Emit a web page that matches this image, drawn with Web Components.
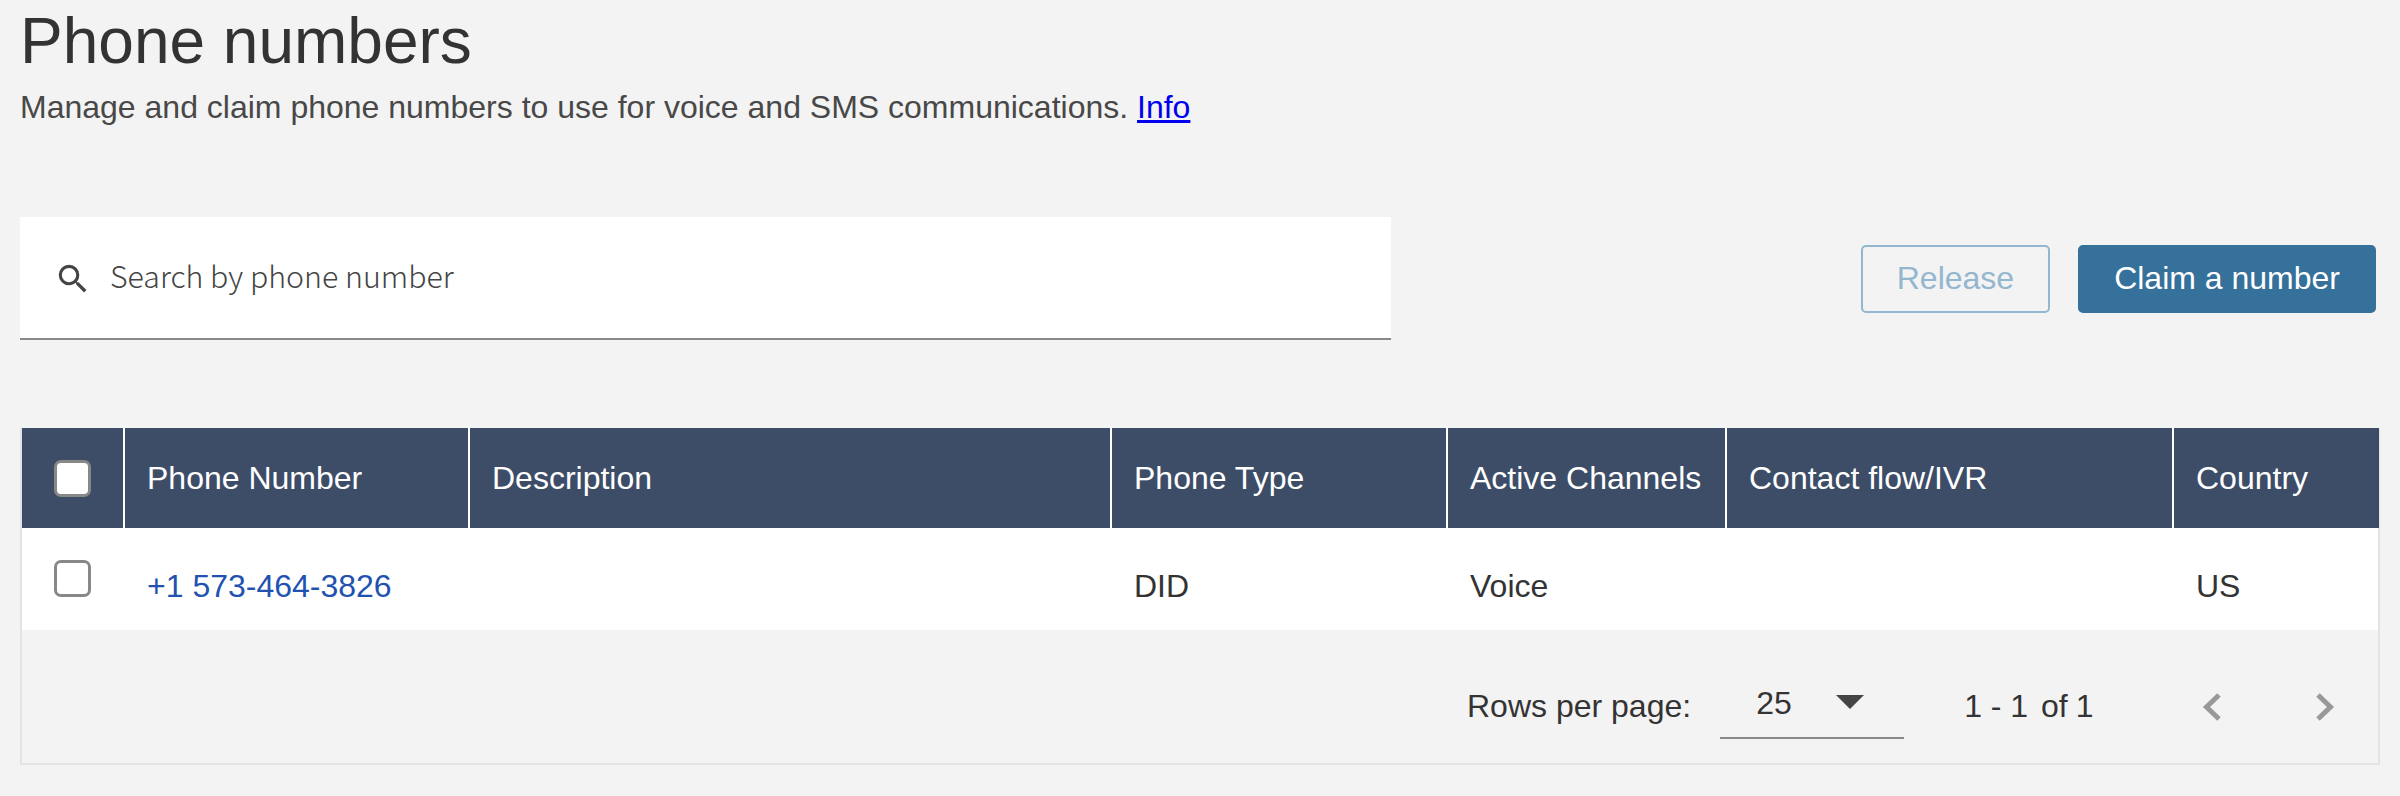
<!DOCTYPE html>
<html>
<head>
<meta charset="utf-8">
<title>Phone numbers</title>
<style>
html, body { margin: 0; background: #f3f3f3; }
body { font-family: "Liberation Sans", Arial, sans-serif; }
</style>
</head>
<body>
<phone-page>
    <page-heading title="Phone numbers">
        Manage and claim phone numbers to use for voice and SMS communications. <a href="#" style="color:#0000ee">Info</a>
    </page-heading>
    <page-toolbar>
        <search-box slot="search" placeholder="Search by phone number"></search-box>
        <action-button disabled>Release</action-button>
        <action-button>Claim a number</action-button>
    </page-toolbar>
    <numbers-table></numbers-table>
</phone-page>

<script>
class PhonePage extends HTMLElement {
    constructor() {
        super();
        this.attachShadow({ mode: 'open' });
        this.shadowRoot.innerHTML = `
<style>
:host { display: block; padding: 0 20px; height: 796px; box-sizing: border-box; overflow: hidden; }
</style>
<slot></slot>`;
    }
}

class PageHeading extends HTMLElement {
    constructor() {
        super();
        this.attachShadow({ mode: 'open' });
        this.shadowRoot.innerHTML = `
<style>
:host { display: block; }
h1 { margin: 0; padding-top: 6px; font-size: 64px; line-height: 70px; font-weight: 400; color: #333; }
p { margin: 0; padding-top: 13px; font-size: 32px; line-height: 36px; color: #484848; }
</style>
<h1></h1>
<p><slot></slot></p>`;
    }

    connectedCallback() {
        this.shadowRoot.querySelector('h1').textContent = this.getAttribute('title');
    }
}

class PageToolbar extends HTMLElement {
    constructor() {
        super();
        this.attachShadow({ mode: 'open' });
        this.shadowRoot.innerHTML = `
<style>
:host { display: flex; align-items: flex-start; gap: 28px; margin-top: 92px; padding-right: 4px; }
.search { flex: 1; display: block; }
</style>
<div class="search"><slot name="search"></slot></div>
<slot></slot>`;
    }
}

class SearchBox extends HTMLElement {
    constructor() {
        super();
        this.attachShadow({ mode: 'open' });
        this.shadowRoot.innerHTML = `
<style>
:host { display: flex; align-items: center; width: 1371px; height: 123px; box-sizing: border-box; background: #fff; border-bottom: 2px solid #888; padding-left: 34px; }
svg { width: 38px; height: 38px; margin-right: 18px; flex: none; position: relative; top: 1px; }
span { font-family: "Noto Sans CJK KR", "Noto Sans", sans-serif; font-size: 30.3px; font-weight: 300; color: #444; position: relative; top: -3px; }
</style>
<svg viewBox="0 0 24 24"><path fill="#444" d="M15.5 14h-.79l-.28-.27A6.47 6.47 0 0 0 16 9.5 6.5 6.5 0 1 0 9.5 16c1.61 0 3.09-.59 4.23-1.57l.27.28v.79l5 4.99L20.49 19l-4.99-5zm-6 0C7.01 14 5 11.99 5 9.5S7.01 5 9.5 5 14 7.01 14 9.5 11.99 14 9.5 14z"/></svg>
<span></span>`;
    }

    connectedCallback() {
        this.shadowRoot.querySelector('span').textContent = this.getAttribute('placeholder');
    }
}

class ActionButton extends HTMLElement {
    constructor() {
        super();
        this.attachShadow({ mode: 'open' });
        // top margin centres the buttons on the search box
        this.shadowRoot.innerHTML = `
<style>
:host { display: inline-flex; align-items: center; justify-content: center; height: 68px; box-sizing: border-box; margin-top: 28px; padding: 0 34px 2px; border-radius: 5px; background: #35719a; border: 2px solid #35719a; color: #fff; font-size: 32px; }
:host([disabled]) { background: transparent; border-color: #93b7cf; color: #93b7cf; }
</style>
<slot></slot>`;
    }
}

class NumbersTable extends HTMLElement {
    constructor() {
        super();
        this.attachShadow({ mode: 'open' });
        this.shadowRoot.innerHTML = `
<style>
:host { display: block; margin-top: 88px; width: 2360px; box-sizing: border-box; border: 2px solid #e3e3e3; border-top: 0; font-size: 32px; }
.grid { display: grid; grid-template-columns: 101px 343px 640px 334px 277px 445px 205px; column-gap: 2px; }
.head { height: 100px; background: #fff; }
.head > div { background: #3d4d68; color: #fff; display: flex; align-items: center; padding-left: 22px; }
.row { height: 102px; background: #fff; color: #333; }
.row > div { display: flex; align-items: center; padding-left: 22px; padding-top: 14px; box-sizing: border-box; }
.head > .check, .row > .check { padding: 0; justify-content: center; }
.row > .check { align-items: flex-start; padding-top: 32px; }
.box { width: 37px; height: 37px; box-sizing: border-box; border: 3px solid #888; border-radius: 7px; background: #fff; margin-left: -1px; }
a { color: #2252b0; text-decoration: none; }
</style>
<div class="grid head">
    <div class="check"><span class="box"></span></div>
    <div>Phone Number</div>
    <div>Description</div>
    <div>Phone Type</div>
    <div>Active Channels</div>
    <div>Contact flow/IVR</div>
    <div>Country</div>
</div>
<div class="grid row">
    <div class="check"><span class="box"></span></div>
    <div><a href="#">+1 573-464-3826</a></div>
    <div></div>
    <div>DID</div>
    <div>Voice</div>
    <div></div>
    <div>US</div>
</div>
<table-footer></table-footer>`;
    }
}

class TableFooter extends HTMLElement {
    constructor() {
        super();
        this.attachShadow({ mode: 'open' });
        this.shadowRoot.innerHTML = `
<style>
:host { display: flex; align-items: center; height: 133px; color: #333; font-size: 32px; padding: 20px 0 0 1445px; box-sizing: border-box; }
.select { display: flex; width: 184px; height: 66px; margin: -2px 0 0 29px; box-sizing: border-box; border-bottom: 2px solid #888; padding: 0 0 3px 36px; align-items: center; }
.caret { width: 0; height: 0; border: 14px solid transparent; border-top: 14px solid #444; border-bottom: 0; margin: -3px 0 0 44px; }
.range { margin-left: 60px; white-space: pre; }
.range span { margin-left: 4px; word-spacing: -1px; }
svg { width: 20px; height: 30px; flex: none; }
.prev { margin-left: 109px; }
.next { margin-left: 93px; }
</style>
<span>Rows per page:</span>
<div class="select"><span>25</span><span class="caret"></span></div>
<span class="range">1 - 1 <span>of 1</span></span>
<svg class="prev" viewBox="0 0 20 30"><path d="M17 3 L4.5 15 L17 27" fill="none" stroke="#999" stroke-width="5"/></svg>
<svg class="next" viewBox="0 0 20 30"><path d="M3 3 L15.5 15 L3 27" fill="none" stroke="#999" stroke-width="5"/></svg>`;
    }
}

customElements.define('phone-page', PhonePage);
customElements.define('page-heading', PageHeading);
customElements.define('page-toolbar', PageToolbar);
customElements.define('search-box', SearchBox);
customElements.define('action-button', ActionButton);
customElements.define('numbers-table', NumbersTable);
customElements.define('table-footer', TableFooter);
</script>
</body>
</html>
